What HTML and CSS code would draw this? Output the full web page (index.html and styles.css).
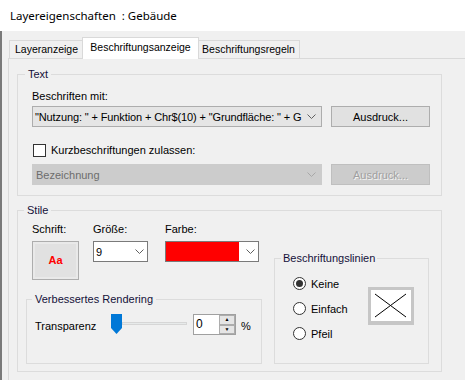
FILE: index.html
```html
<!DOCTYPE html>
<html lang="de">
<head>
    <meta charset="UTF-8">
    <title>Layereigenschaften : Gebäude</title>
    <link rel="stylesheet" href="styles.css">
</head>
<body>
    <div class="titlebar">Layereigenschaften  : Gebäude</div>
    <div class="window">
        <div class="tabs">
            <div class="tab tab-first">Layeranzeige</div>
            <div class="tab tab-active">Beschriftungsanzeige</div>
            <div class="tab tab-last">Beschriftungsregeln</div>
        </div>
        <div class="panel">
            <fieldset class="group group-text">
                <legend>Text</legend>
                <div class="label">Beschriften mit:</div>
                <div class="row">
                    <div class="combo combo-wide">
                        <span class="combo-value combo-expr">"Nutzung: " + Funktion + Chr$(10) + "Grundfläche: " + G</span>
                        <svg class="chevron" viewBox="0 0 9 5" width="9" height="5"><path d="M0.5 0.5 L4.5 4.5 L8.5 0.5" /></svg>
                    </div>
                    <button class="button">Ausdruck...</button>
                </div>
                <label class="check">
                    <span class="checkbox"></span>
                    <span>Kurzbeschriftungen zulassen:</span>
                </label>
                <div class="row row-disabled">
                    <div class="combo combo-wide combo-disabled">
                        <span class="combo-value">Bezeichnung</span>
                        <svg class="chevron" viewBox="0 0 9 5" width="9" height="5"><path d="M0.5 0.5 L4.5 4.5 L8.5 0.5" /></svg>
                    </div>
                    <button class="button button-disabled" disabled>Ausdruck...</button>
                </div>
            </fieldset>

            <fieldset class="group group-stile">
                <legend>Stile</legend>
                <div class="stile-grid">
                    <div class="fonts">
                        <div class="field field-font">
                            <div class="label">Schrift:</div>
                            <div class="font-button">Aa</div>
                        </div>
                        <div class="field field-size">
                            <div class="label">Größe:</div>
                            <div class="combo combo-white combo-size">
                                <span class="combo-value">9</span>
                                <svg class="chevron" viewBox="0 0 9 5" width="9" height="5"><path d="M0.5 0.5 L4.5 4.5 L8.5 0.5" /></svg>
                            </div>
                        </div>
                        <div class="field field-color">
                            <div class="label">Farbe:</div>
                            <div class="combo combo-white combo-color">
                                <span class="swatch"></span>
                                <svg class="chevron" viewBox="0 0 9 5" width="9" height="5"><path d="M0.5 0.5 L4.5 4.5 L8.5 0.5" /></svg>
                            </div>
                        </div>
                    </div>

                    <fieldset class="group group-render">
                        <legend>Verbessertes Rendering</legend>
                        <div class="render-row">
                            <span class="render-label">Transparenz</span>
                            <div class="slider">
                                <svg class="thumb" viewBox="0 0 11 20" width="11" height="20"><path d="M0 0 H11 V14 L5.5 20 L0 14 Z" /></svg>
                                <span class="track"></span>
                            </div>
                            <div class="spin">
                                <span class="spin-value">0</span>
                                <div class="spin-buttons">
                                    <span class="spin-btn">&#9650;</span>
                                    <span class="spin-btn">&#9660;</span>
                                </div>
                            </div>
                            <span class="percent">%</span>
                        </div>
                    </fieldset>

                    <fieldset class="group group-lines">
                        <legend>Beschriftungslinien</legend>
                        <div class="lines-body">
                            <div class="radios">
                                <label class="radio-row"><span class="radio radio-checked"></span>Keine</label>
                                <label class="radio-row"><span class="radio"></span>Einfach</label>
                                <label class="radio-row"><span class="radio"></span>Pfeil</label>
                            </div>
                            <div class="preview">
                                <svg viewBox="0 0 40 31" width="40" height="31">
                                    <path d="M4 4 L35 27 M35 4 L4 27" />
                                </svg>
                            </div>
                        </div>
                    </fieldset>
                </div>
            </fieldset>
        </div>
    </div>
</body>
</html>
```
FILE: styles.css
```css
body {
    margin: 0;
    width: 465px;
    height: 380px;
    overflow: hidden;
    background-color: #f0f0f0;
    font-family: "Liberation Sans", Arial, sans-serif;
    font-size: 11px;
    color: #000;
}
.titlebar {
    height: 31px;
    line-height: 31px;
    padding-left: 10px;
    background-color: #fff;
    font-family: "Noto Sans", sans-serif;
    font-size: 11.5px;
    white-space: pre;
}
.window {
    border-left: 2px solid #7a7a7a;
    height: 349px;
}

/* tabs */
.tabs {
    display: flex;
    align-items: flex-end;
    height: 27px;
    padding: 0 0 0 7px;
    box-sizing: border-box;
}
.tab {
    height: 18px;
    box-sizing: border-box;
    border: 1px solid #d9d9d9;
    border-bottom: none;
    background-color: #f0f0f0;
    font-size: 10.5px;
    line-height: 17px;
    text-align: center;
}
.tab-first {
    width: 75px;
}
.tab-active {
    position: relative;
    z-index: 1;
    width: 117px;
    height: 22px;
    margin: 0 0 -1px -2px;
    background-color: #fff;
    line-height: 18px;
}
.tab-last {
    width: 103px;
    margin-left: -2px;
}
.panel {
    margin-left: 6px;
    border: 1px solid #d9d9d9;
    border-right: none;
    border-bottom: none;
    height: 322px;
    box-sizing: border-box;
    padding: 8px 0 0 8px;
}

/* group boxes */
.group {
    margin: 0;
    border: 1px solid #dcdcdc;
    box-sizing: border-box;
    min-width: 0;
}
.group legend {
    padding: 0 3px;
    line-height: 14px;
    color: #14103a;
}
.group-text {
    width: 425px;
    padding: 8px 10px 10px 14px;
}
.group-text legend {
    margin-left: -7px;
}
.label {
    line-height: 14px;
}
.group-text > .label {
    margin-bottom: 3px;
}
.row {
    display: flex;
}
.row-disabled {
    margin-top: 5px;
}

/* combos and buttons */
.combo {
    display: flex;
    align-items: center;
    height: 21px;
    box-sizing: border-box;
    border: 1px solid #adadad;
    background-color: #e5e5e5;
    overflow: hidden;
}
.combo-wide {
    width: 290px;
    padding: 0 5px 0 2px;
}
.combo-value {
    flex: 1;
    min-width: 0;
    white-space: nowrap;
}
.combo-expr {
    letter-spacing: -0.12px;
}
.chevron {
    flex: none;
    fill: none;
    stroke: #606060;
    stroke-width: 1;
    margin-left: 4px;
}
.combo-disabled {
    background-color: #cccccc;
    border-color: #cccccc;
    color: #6d6d6d;
    padding-left: 3px;
}
.combo-disabled .chevron {
    stroke: #a8a8a8;
}
.button {
    width: 99px;
    height: 21px;
    margin-left: 9px;
    padding: 0;
    border: 1px solid #adadad;
    background-color: #e1e1e1;
    font-family: inherit;
    font-size: 11px;
    color: #000;
}
.button-disabled {
    border-color: #bfbfbf;
    background-color: #cccccc;
    color: #a0a0a0;
    text-shadow: 1px 1px 0 #f4f4f4;
}
.check {
    display: flex;
    align-items: center;
    height: 18px;
    margin-top: 14px;
}
.checkbox {
    width: 13px;
    height: 13px;
    box-sizing: border-box;
    margin: 0 5px 0 1px;
    border: 1px solid #333;
    background-color: #fff;
}

/* Stile */
.group-stile {
    width: 425px;
    margin-top: 7px;
    padding: 5px 11px 7px 8px;
}
.group-stile > legend {
    margin-left: -2px;
}
.stile-grid {
    display: grid;
    grid-template-columns: 236px 155px;
    column-gap: 12px;
}
.fonts {
    display: flex;
    padding-left: 6px;
}
.field .label {
    margin-bottom: 5px;
}
.field-size {
    margin-left: 14px;
}
.field-color {
    margin-left: 17px;
}
.font-button {
    width: 47px;
    height: 39px;
    margin-top: 1px;
    box-sizing: border-box;
    border: 1px solid #adadad;
    background-color: #e1e1e1;
    box-shadow: inset 0 0 0 2px #e9e9e9;
    color: #ff0000;
    font-weight: bold;
    font-size: 11px;
    line-height: 37px;
    text-align: center;
}
.combo-white {
    border-color: #7a7a7a;
    background-color: #fff;
}
.combo-size {
    width: 55px;
    padding: 0 3px 0 2px;
}
.combo-color {
    width: 94px;
    padding: 0 3px 0 0;
}
.swatch {
    flex: 1;
    align-self: stretch;
    background-color: #ff0000;
    margin-right: 3px;
}

.group-render {
    grid-column: 1;
    grid-row: 2;
    height: 72px;
    margin-top: 12px;
    padding: 6px 8px 0 8px;
}
.group-render legend {
    margin-left: -3px;
}
.render-row {
    display: flex;
    align-items: center;
}
.render-label {
    width: 76px;
    margin-top: 4px;
}
.slider {
    display: flex;
    align-items: flex-start;
}
.thumb {
    fill: #0078d7;
}
.track {
    width: 65px;
    height: 3px;
    margin-top: 8px;
    box-sizing: border-box;
    border: 1px solid #d6d6d6;
    background-color: #e7eaea;
}
.spin {
    display: flex;
    width: 43px;
    height: 21px;
    margin: 2px 0 0 6px;
    box-sizing: border-box;
    border: 1px solid #a0a0a0;
    background-color: #fff;
}
.spin-value {
    flex: 1;
    padding-left: 2px;
    line-height: 19px;
    font-size: 12px;
}
.spin-buttons {
    display: flex;
    flex-direction: column;
    width: 16px;
}
.spin-btn {
    flex: 1;
    box-sizing: border-box;
    border: 1px solid #adadad;
    background-color: #e5e5e5;
    font-size: 5px;
    line-height: 7px;
    text-align: center;
}
.percent {
    margin: 4px 0 0 5px;
}

.group-lines {
    grid-column: 2;
    grid-row: 1 / 3;
    align-self: end;
    height: 113px;
    padding: 6px 8px 0 18px;
}
.group-lines legend {
    margin-left: -12px;
    padding: 0 2px;
}
.lines-body {
    display: flex;
}
.radios {
    width: 75px;
}
.radio-row {
    display: flex;
    align-items: center;
    height: 25px;
}
.radio {
    display: flex;
    align-items: center;
    justify-content: center;
    width: 13px;
    height: 13px;
    box-sizing: border-box;
    margin-right: 5px;
    border: 1px solid #333;
    border-radius: 50%;
    background-color: #fff;
}
.radio-checked::after {
    content: "";
    width: 7px;
    height: 7px;
    border-radius: 50%;
    background-color: #333;
}
.preview {
    align-self: flex-start;
    margin-top: 16px;
    width: 46px;
    height: 38px;
    box-sizing: border-box;
    border: 3px solid #c6c6c6;
    border-width: 3px 3px 4px 3px;
    background-color: #fff;
}
.preview svg {
    display: block;
    fill: none;
    stroke: #000;
    stroke-width: 1;
}
```
